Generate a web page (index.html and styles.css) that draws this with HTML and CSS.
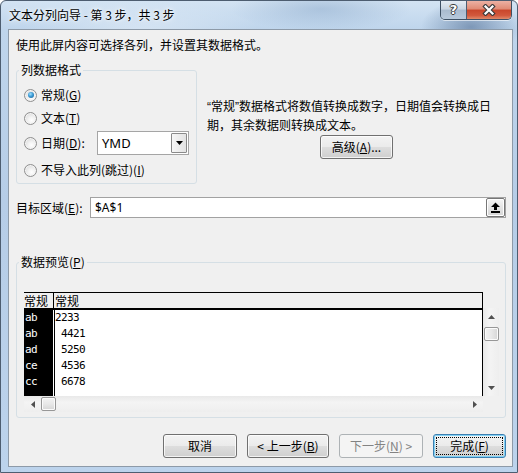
FILE: index.html
```html
<!DOCTYPE html>
<html lang="zh-CN">
<head>
<meta charset="utf-8">
<title>文本分列向导</title>
<link rel="stylesheet" href="styles.css">
</head>
<body>
<div class="window">
  <div class="titlebar">
    <div class="title">文本分列向导 - 第 3 步，共 3 步</div>
    <div class="caption-buttons">
      <div class="cap-btn help">?</div>
      <div class="cap-btn close">
        <svg width="14" height="12" viewBox="0 0 14 12"><path d="M3.5 2.5 L10.5 9.5 M10.5 2.5 L3.5 9.5" stroke="#3b3b3b" stroke-width="4.4" stroke-linecap="square" fill="none"/><path d="M3.5 2.5 L10.5 9.5 M10.5 2.5 L3.5 9.5" stroke="#ffffff" stroke-width="2.2" stroke-linecap="square" fill="none"/></svg>
      </div>
    </div>
  </div>
  <div class="client">
    <p class="intro">使用此屏内容可选择各列，并设置其数据格式。</p>

    <div class="format-row">
      <div class="group format-group">
        <div class="legend">列数据格式</div>
        <div class="radio-row r1"><span class="radio checked"><span class="dot"></span></span><span>常规(<u>G</u>)</span></div>
        <div class="radio-row r2"><span class="radio"></span><span>文本(<u>T</u>)</span></div>
        <div class="radio-row r3"><span class="radio"></span><span>日期(<u>D</u>):</span>
          <div class="select">
            <span class="select-text">YMD</span>
            <span class="select-btn"><svg width="7" height="4" viewBox="0 0 7 4"><path d="M0 0 H7 L3.5 4 Z" fill="#000"/></svg></span>
          </div>
        </div>
        <div class="radio-row r4"><span class="radio"></span><span>不导入此列(跳过)(<u>I</u>)</span></div>
      </div>
      <div class="desc">
        <p class="desc-text"><span class="q">“</span>常规<span class="q">”</span>数据格式将数值转换成数字，日期值会转换成日<br>期，其余数据则转换成文本。</p>
        <div class="btn adv">高级(<u>A</u>)...</div>
      </div>
    </div>

    <div class="target-row">
      <span class="target-label">目标区域(<u>E</u>):</span>
      <div class="input">
        <span class="input-text">$A$1</span>
        <span class="collapse-btn"><svg width="11" height="11" viewBox="0 0 11 11"><path d="M5.5 0.5 L10 5 H7 V8 H4 V5 H1 Z" fill="#000"/><rect x="1" y="9" width="9" height="2" fill="#000"/></svg></span>
      </div>
    </div>

    <div class="group preview-group">
      <div class="legend">数据预览(<u>P</u>)</div>
      <div class="grid">
        <div class="grid-head">
          <div class="hc1">常规</div>
          <div class="hc2">常规</div>
        </div>
        <div class="grid-body">
          <div class="bc1">
            <div class="cell">ab</div>
            <div class="cell">ab</div>
            <div class="cell">ad</div>
            <div class="cell">ce</div>
            <div class="cell">cc</div>
          </div>
          <div class="bc2">
            <div class="cell">2233</div>
            <div class="cell"> 4421</div>
            <div class="cell"> 5250</div>
            <div class="cell"> 4536</div>
            <div class="cell"> 6678</div>
          </div>
        </div>
        <div class="vscroll">
          <div class="arrow-box"><svg width="7" height="4" viewBox="0 0 7 4"><path d="M3.5 0 L7 4 H0 Z" fill="#505050"/></svg></div>
          <div class="thumb vthumb"></div>
          <div class="spacer"></div>
          <div class="arrow-box"><svg width="7" height="4" viewBox="0 0 7 4"><path d="M0 0 H7 L3.5 4 Z" fill="#505050"/></svg></div>
        </div>
        <div class="hscroll">
          <div class="arrow-box"><svg width="4" height="7" viewBox="0 0 4 7"><path d="M0 3.5 L4 0 V7 Z" fill="#505050"/></svg></div>
          <div class="thumb hthumb"></div>
          <div class="spacer"></div>
          <div class="arrow-box"><svg width="4" height="7" viewBox="0 0 4 7"><path d="M0 0 L4 3.5 L0 7 Z" fill="#505050"/></svg></div>
        </div>
      </div>
    </div>

    <div class="button-row">
      <div class="btn w74">取消</div>
      <div class="btn w82">&lt;&nbsp;上一步(<u>B</u>)</div>
      <div class="btn w84 disabled">下一步(<u>N</u>)&nbsp;&gt;</div>
      <div class="btn w73 default"><span class="focus">完成(<u>F</u>)</span></div>
    </div>
  </div>
</div>
</body>
</html>
```

FILE: styles.css
```css
* { box-sizing: border-box; }
html, body { margin: 0; padding: 0; }
body {
  width: 518px;
  height: 473px;
  overflow: hidden;
  font-family: "Noto Sans CJK SC", "Noto Sans", sans-serif;
  font-size: 12px;
  color: #000;
  background: #ffffff;
}
u { text-decoration: underline; text-underline-offset: 1px; }

.window {
  width: 518px;
  height: 473px;
  display: flex;
  flex-direction: column;
  border: 1px solid #4d5d70;
  border-radius: 6px 6px 0 0;
  background:
    radial-gradient(ellipse 50px 28px at 470px 26px, rgba(70, 100, 140, 0.55), rgba(70, 100, 140, 0) 100%),
    radial-gradient(ellipse 90px 22px at 320px 8px, rgba(110, 145, 185, 0.35), rgba(110, 145, 185, 0) 100%),
    radial-gradient(ellipse 120px 30px at 140px 30px, rgba(255, 255, 255, 0.35), rgba(255, 255, 255, 0) 100%),
    linear-gradient(to bottom, #d3e3f3 0px, #bfd5ec 28px, #b6cde7 200px, #bcd3ec 100%);
}

.titlebar {
  height: 28px;
  display: flex;
  align-items: flex-start;
  padding-left: 8px;
}
.title {
  margin-top: 6px;
  font-size: 12px;
  line-height: 16px;
  color: #000;
  text-shadow: 0 0 6px rgba(255, 255, 255, 0.9), 0 0 3px rgba(255, 255, 255, 0.9);
}
.caption-buttons {
  margin-left: auto;
  margin-right: 5px;
  display: flex;
  height: 19px;
  border: 1px solid #3d4f63;
  border-top: none;
  border-radius: 0 0 5px 5px;
  overflow: hidden;
  box-shadow: 0 1px 0 rgba(255, 255, 255, 0.6);
}
.cap-btn {
  height: 18px;
  display: flex;
  align-items: center;
  justify-content: center;
}
.help {
  width: 26px;
  border-right: 1px solid #4b5d72;
  background: linear-gradient(to bottom, #e4ebf3 0%, #c9d5e2 45%, #a9bbcf 50%, #b8c9dc 100%);
  color: #fff;
  font-family: "DejaVu Sans", sans-serif;
  font-weight: bold;
  font-size: 13px;
  line-height: 18px;
  text-shadow: 1px 0 0 #3a3a3a, -1px 0 0 #3a3a3a, 0 1px 0 #3a3a3a, 0 -1px 0 #3a3a3a;
}
.close {
  width: 44px;
  background: linear-gradient(to bottom, #ecb1a3 0%, #df8a74 45%, #c9462b 50%, #d2583c 80%, #e08a6a 100%);
}

.client {
  margin-left: 7px;
  width: 505px;
  height: 438px;
  border: 1px solid #8d9aa8;
  background: #f0f0f0;
  padding: 0 6px 0 7px;
  display: flex;
  flex-direction: column;
}

.intro {
  margin: 7px 0 0 0;
  line-height: 16px;
}

.format-row {
  margin-top: 17px;
  display: flex;
  align-items: flex-start;
}

.group {
  border: 1px solid #d5dfe5;
  border-radius: 3px;
  padding: 0 7px;
  display: flex;
  flex-direction: column;
}
.legend {
  align-self: flex-start;
  margin: -8px 0 0 -5px;
  padding: 0 2px;
  line-height: 14px;
  height: 14px;
  background: #f0f0f0;
}

.format-group {
  width: 181px;
  height: 114px;
  flex: none;
}
.radio-row {
  display: flex;
  align-items: center;
  height: 16px;
  line-height: 16px;
}
.radio-row.r1 { margin-top: 10px; }
.radio-row.r2 { margin-top: 7px; }
.radio-row.r3 { margin-top: 5px; height: 24px; }
.radio-row.r4 { margin-top: 7px; }

.radio {
  width: 13px;
  height: 13px;
  margin-right: 4px;
  border-radius: 50%;
  border: 1px solid #8f8f8f;
  background: radial-gradient(circle at 60% 65%, #ffffff 0%, #f2f2f2 35%, #cfcfcf 100%);
  box-shadow: inset 0 0 0 1px #f4f4f4;
  display: flex;
  align-items: center;
  justify-content: center;
  flex: none;
}
.radio .dot {
  width: 6px;
  height: 6px;
  border-radius: 50%;
  background: radial-gradient(circle at 40% 35%, #9fe0ff 0%, #3c9ad4 45%, #135b8f 100%);
}

.select {
  margin-left: auto;
  width: 92px;
  height: 24px;
  border: 1px solid #a5a5a5;
  background: #fff;
  display: flex;
  align-items: center;
  padding: 1px;
}
.select-text {
  padding-left: 3px;
  font-family: "Noto Sans", sans-serif;
  font-size: 13px;
  line-height: 16px;
}
.select-btn {
  margin-left: auto;
  width: 16px;
  height: 20px;
  border: 1px solid #8a8a8a;
  border-radius: 1px;
  background: linear-gradient(to right, #f7f7f7, #e2e2e2);
  display: flex;
  align-items: center;
  justify-content: center;
}

.desc {
  margin-left: 10px;
  display: flex;
  flex-direction: column;
}
.desc-text {
  margin: 27px 0 0 0;
  line-height: 17px;
  white-space: nowrap;
}
.q {
  font-family: "Liberation Sans", sans-serif;
}

.btn {
  height: 24px;
  border: 1px solid #707070;
  border-radius: 3px;
  background: linear-gradient(to bottom, #f3f3f3 0%, #ebebeb 48%, #dddddd 52%, #cfcfcf 100%);
  box-shadow: inset 0 0 0 1px rgba(255, 255, 255, 0.75);
  display: flex;
  align-items: center;
  justify-content: center;
  line-height: 16px;
  white-space: nowrap;
}
.adv {
  margin: 2px 0 0 113px;
  width: 73px;
}

.target-row {
  margin-top: 13px;
  height: 21px;
  display: flex;
  align-items: center;
}
.target-label {
  flex: 0 0 74px;
  line-height: 16px;
}
.input {
  flex: 1;
  height: 21px;
  border: 1px solid #a2a2a2;
  background: #fff;
  display: flex;
  align-items: center;
}
.input-text {
  padding-left: 4px;
  font-family: "Noto Sans", sans-serif;
  font-size: 12px;
  line-height: 16px;
}
.collapse-btn {
  margin-left: auto;
  width: 19px;
  height: 19px;
  border: 1px solid #777;
  border-radius: 2px;
  background: linear-gradient(to bottom, #f6f6f6, #e4e4e4 50%, #d6d6d6);
  box-shadow: inset 0 0 0 1px #fff;
  display: flex;
  align-items: center;
  justify-content: center;
}

.preview-group {
  margin-top: 44px;
  height: 156px;
}
.grid {
  margin-top: 23px;
  display: grid;
  grid-template-columns: 459px 16px;
  grid-template-rows: 16px 88px 16px;
}
.grid-head {
  grid-column: 1;
  grid-row: 1;
  border-top: 1px solid #000;
  border-right: 1px solid #000;
  display: flex;
  line-height: 15px;
}
.hc1 { width: 29px; }
.hc2 { border-left: 1px solid #000; padding-left: 1px; }

.grid-body {
  grid-column: 1;
  grid-row: 2;
  border-top: 2px solid #000;
  border-right: 1px solid #000;
  background: #fff;
  display: flex;
  font-family: "DejaVu Sans Mono", monospace;
  font-size: 11px;
  letter-spacing: -0.6px;
}
.bc1 {
  width: 29px;
  background: #000;
  color: #fff;
  padding-left: 1px;
}
.bc2 {
  margin-left: 1px;
  border-left: 1px solid #000;
  flex: 1;
}
.cell {
  height: 16px;
  line-height: 16px;
  white-space: pre;
}

.vscroll {
  grid-column: 2;
  grid-row: 2;
  background: linear-gradient(to right, #e9e9e9, #f4f4f4 40%, #eeeeee);
  display: flex;
  flex-direction: column;
  align-items: center;
}
.hscroll {
  grid-column: 1;
  grid-row: 3;
  background: linear-gradient(to bottom, #e9e9e9, #f4f4f4 40%, #eeeeee);
  display: flex;
  align-items: center;
}
.arrow-box {
  width: 17px;
  height: 17px;
  flex: none;
  display: flex;
  align-items: center;
  justify-content: center;
}
.vscroll .arrow-box { width: 16px; }
.hscroll .arrow-box { height: 16px; }
.spacer { flex: 1; }
.thumb {
  border: 1px solid #979797;
  border-radius: 2px;
  box-shadow: inset 0 0 0 1px #fbfbfb;
  flex: none;
}
.vthumb {
  margin-top: 2px;
  width: 15px;
  height: 14px;
  background: linear-gradient(to right, #f3f3f3, #e8e8e8 50%, #d6d6d6);
}
.hthumb {
  width: 15px;
  height: 14px;
  background: linear-gradient(to bottom, #f3f3f3, #e8e8e8 50%, #d6d6d6);
}

.button-row {
  margin-top: 16px;
  display: flex;
  justify-content: flex-end;
  gap: 10px;
}
.w74 { width: 74px; }
.w82 { width: 82px; }
.w84 { width: 84px; }
.w73 { width: 73px; }
.btn.disabled {
  border-color: #adb2b5;
  background: #f4f4f4;
  box-shadow: none;
  color: #838383;
}
.btn.default {
  border-color: #3c7fb1;
  box-shadow: inset 0 0 0 1px #7fd1f5;
  padding: 2px;
  align-items: stretch;
}
.focus {
  flex: 1;
  border: 1px dotted #000;
  display: flex;
  align-items: center;
  justify-content: center;
}
```
